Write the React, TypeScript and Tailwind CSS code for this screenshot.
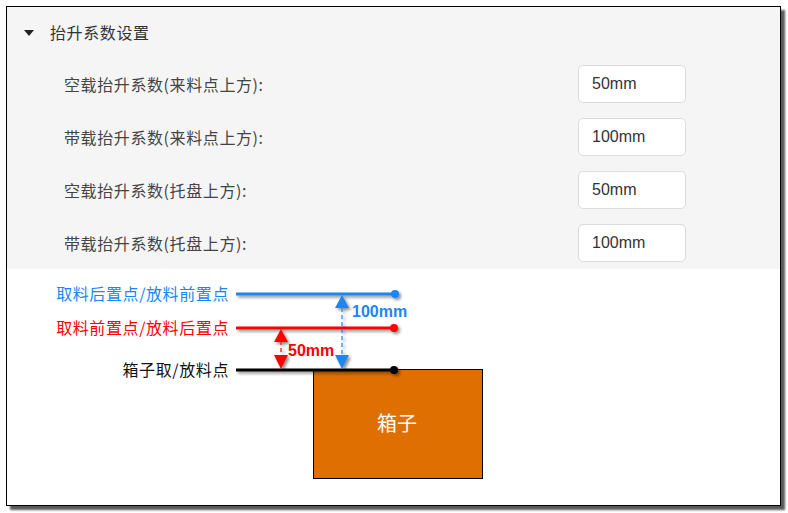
import React from "react";

const rows = [
  { label: "空载抬升系数(来料点上方):", value: "50mm" },
  { label: "带载抬升系数(来料点上方):", value: "100mm" },
  { label: "空载抬升系数(托盘上方):", value: "50mm" },
  { label: "带载抬升系数(托盘上方):", value: "100mm" },
];

const BLUE = "#1a86f2";
const RED = "#ff0000";

const Diagram = () => (
  <svg width="773" height="236" viewBox="0 0 773 236" className="block">
    <defs>
      <filter id="sh" x="-20%" y="-200%" width="140%" height="500%">
        <feDropShadow dx="2" dy="2" stdDeviation="1.5" floodColor="#000" floodOpacity="0.45" />
      </filter>
    </defs>
    <g
      fontFamily="'Noto Sans CJK SC', 'Microsoft YaHei', sans-serif"
      fontSize="16"
      letterSpacing="0.6"
      textAnchor="end"
    >
      <text x="222" y="31" fill={BLUE}>取料后置点/放料前置点</text>
      <text x="222" y="65" fill={RED}>取料前置点/放料后置点</text>
      <text x="222" y="107" fill="#111">箱子取/放料点</text>
    </g>

    {/* box */}
    <rect x="306.5" y="100.5" width="169" height="109" fill="#df7000" stroke="#000" strokeWidth="1" />
    <text
      x="390"
      y="162"
      fill="#fff"
      fontSize="20"
      textAnchor="middle"
      fontFamily="'Noto Sans CJK SC', sans-serif"
    >
      箱子
    </text>

    {/* level lines */}
    <g filter="url(#sh)">
      <line x1="229" y1="25" x2="388" y2="25" stroke={BLUE} strokeWidth="3" />
      <circle cx="388" cy="25" r="4" fill={BLUE} />
      <line x1="229" y1="59" x2="387" y2="59" stroke={RED} strokeWidth="3" />
      <circle cx="387" cy="59" r="4" fill={RED} />
      <line x1="229" y1="101" x2="387" y2="101" stroke="#000" strokeWidth="3" />
      <circle cx="387" cy="101" r="4" fill="#000" />
    </g>

    {/* 50mm arrow */}
    <g filter="url(#sh)">
      <line x1="274" y1="72" x2="274" y2="87" stroke={RED} strokeWidth="1.2" strokeDasharray="4 3" />
      <polygon points="274,60 267,73 281,73" fill={RED} />
      <polygon points="274,100 267,86 281,86" fill={RED} />
    </g>
    <text x="281" y="87" fill={RED} fontSize="16" fontWeight="700" fontFamily="'Liberation Sans', Arial, sans-serif">
      50mm
    </text>

    {/* 100mm arrow */}
    <g filter="url(#sh)">
      <line x1="335" y1="39" x2="335" y2="86" stroke={BLUE} strokeWidth="1.2" strokeDasharray="4 3" />
      <polygon points="335,26 328,39 342,39" fill={BLUE} />
      <polygon points="335,100 328,86 342,86" fill={BLUE} />
    </g>
    <text x="345" y="48" fill={BLUE} fontSize="16" fontWeight="700" fontFamily="'Liberation Sans', Arial, sans-serif">
      100mm
    </text>
  </svg>
);

export default function App() {
  return (
    <div className="w-[788px] h-[513px] bg-white pl-[6px] pt-[6px] font-['Noto_Sans_CJK_SC',sans-serif]">
      <div className="w-[775px] h-[500px] border border-black bg-white shadow-[4px_4px_2px_rgba(0,0,0,0.65)] overflow-hidden">
        <div className="bg-[#f5f5f5] h-[262px]">
          <div className="flex h-[50px] items-center pl-[17px] text-[16px] tracking-[0.6px] text-[#333]">
            <svg width="10" height="6" viewBox="0 0 10 6" className="mr-[16px] mt-[1px]">
              <polygon points="0,0 10,0 5,6" fill="#222" />
            </svg>
            <span>抬升系数设置</span>
          </div>
          {rows.map(({ label, value }) => (
            <div key={label} className="flex h-[53px] items-center pl-[57px] pr-[94px]">
              <span className="flex-1 text-[16px] tracking-[0.6px] text-[#444]">{label}</span>
              <div className="flex h-[38px] w-[108px] items-center rounded-[5px] border border-[#dcdcdc] bg-white pl-[13px] font-['Liberation_Sans',Arial,sans-serif] text-[16px] text-[#333]">
                {value}
              </div>
            </div>
          ))}
        </div>
        <Diagram />
      </div>
    </div>
  );
}
